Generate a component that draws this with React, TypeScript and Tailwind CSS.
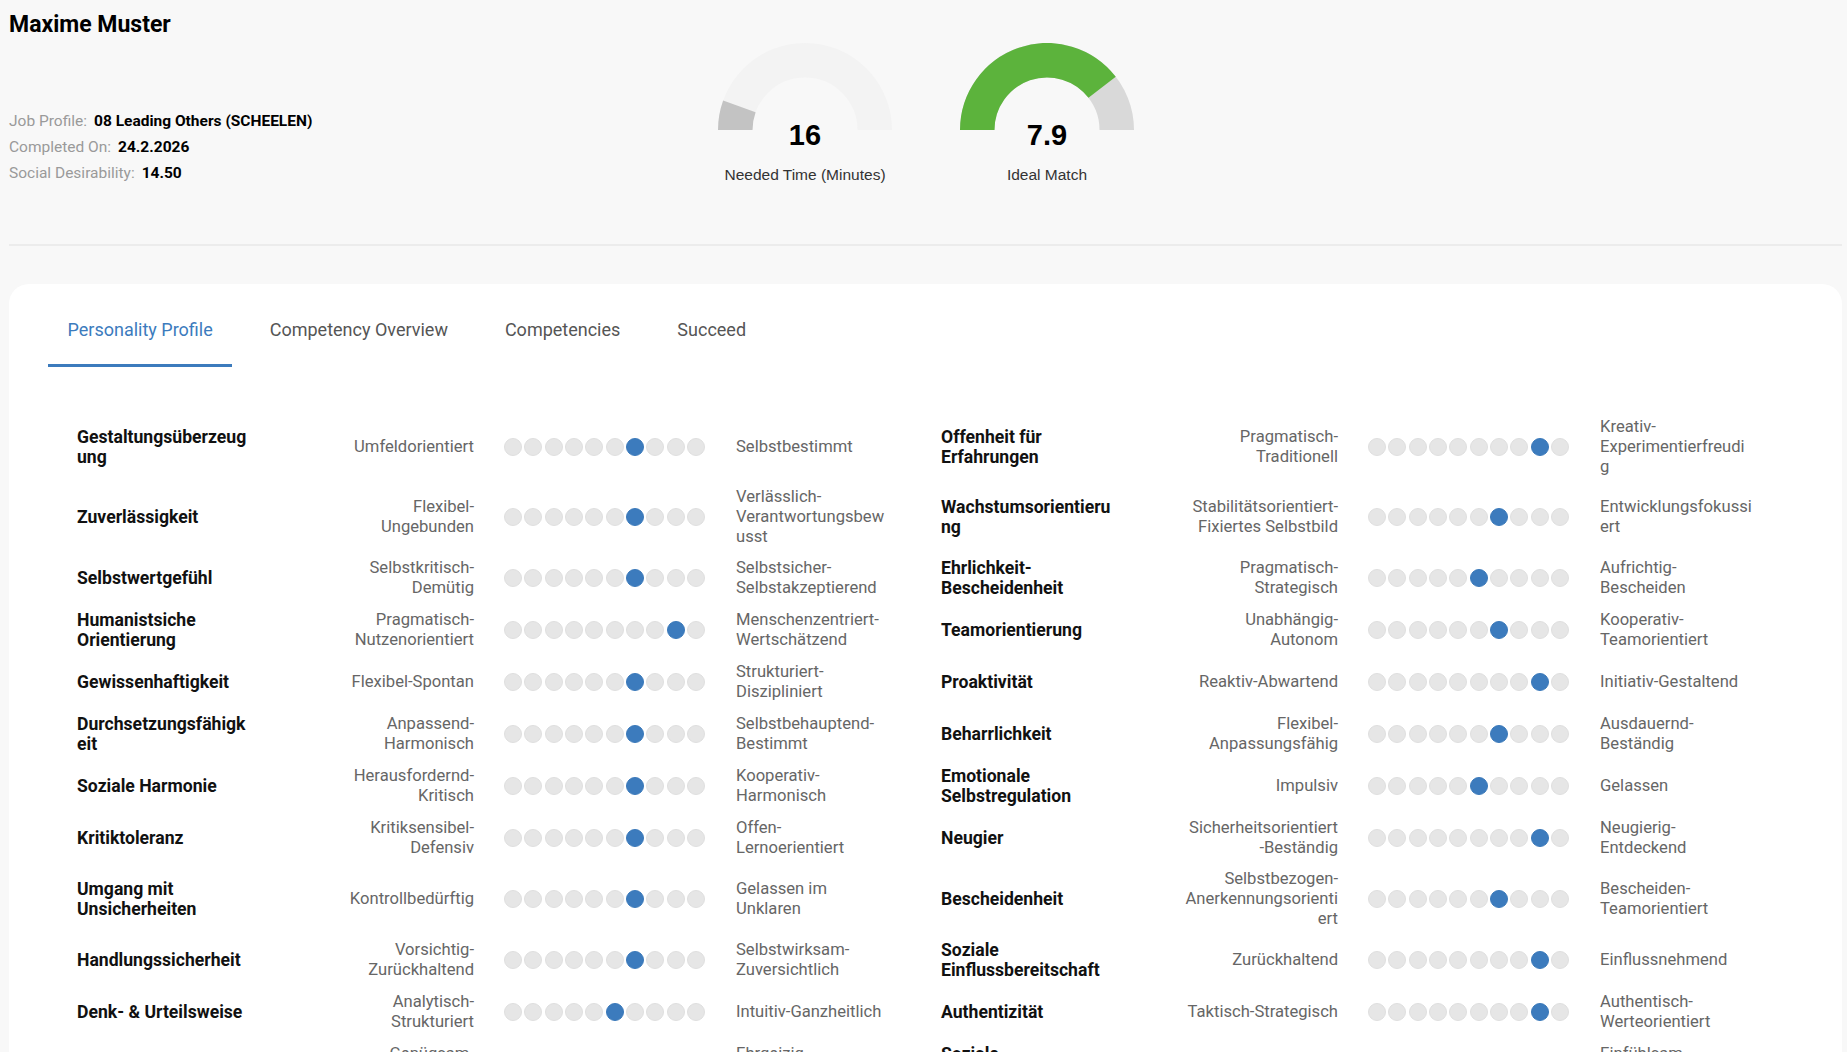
import React from 'react';

type Trait = {
  name: string;
  low: string;
  high: string;
  value: number;
};

type Row = [Trait, Trait];

const rows: Row[] = [
  [
    { name: 'Gestaltungsüberzeug\nung', low: 'Umfeldorientiert', high: 'Selbstbestimmt', value: 6 },
    { name: 'Offenheit für\nErfahrungen', low: 'Pragmatisch-\nTraditionell', high: 'Kreativ-\nExperimentierfreudi\ng', value: 8 },
  ],
  [
    { name: 'Zuverlässigkeit', low: 'Flexibel-\nUngebunden', high: 'Verlässlich-\nVerantwortungsbew\nusst', value: 6 },
    { name: 'Wachstumsorientieru\nng', low: 'Stabilitätsorientiert-\nFixiertes Selbstbild', high: 'Entwicklungsfokussi\nert', value: 6 },
  ],
  [
    { name: 'Selbstwertgefühl', low: 'Selbstkritisch-\nDemütig', high: 'Selbstsicher-\nSelbstakzeptierend', value: 6 },
    { name: 'Ehrlichkeit-\nBescheidenheit', low: 'Pragmatisch-\nStrategisch', high: 'Aufrichtig-\nBescheiden', value: 5 },
  ],
  [
    { name: 'Humanistsiche\nOrientierung', low: 'Pragmatisch-\nNutzenorientiert', high: 'Menschenzentriert-\nWertschätzend', value: 8 },
    { name: 'Teamorientierung', low: 'Unabhängig-\nAutonom', high: 'Kooperativ-\nTeamorientiert', value: 6 },
  ],
  [
    { name: 'Gewissenhaftigkeit', low: 'Flexibel-Spontan', high: 'Strukturiert-\nDiszipliniert', value: 6 },
    { name: 'Proaktivität', low: 'Reaktiv-Abwartend', high: 'Initiativ-Gestaltend', value: 8 },
  ],
  [
    { name: 'Durchsetzungsfähigk\neit', low: 'Anpassend-\nHarmonisch', high: 'Selbstbehauptend-\nBestimmt', value: 6 },
    { name: 'Beharrlichkeit', low: 'Flexibel-\nAnpassungsfähig', high: 'Ausdauernd-\nBeständig', value: 6 },
  ],
  [
    { name: 'Soziale Harmonie', low: 'Herausfordernd-\nKritisch', high: 'Kooperativ-\nHarmonisch', value: 6 },
    { name: 'Emotionale\nSelbstregulation', low: 'Impulsiv', high: 'Gelassen', value: 5 },
  ],
  [
    { name: 'Kritiktoleranz', low: 'Kritiksensibel-\nDefensiv', high: 'Offen-\nLernoerientiert', value: 6 },
    { name: 'Neugier', low: 'Sicherheitsorientiert\n-Beständig', high: 'Neugierig-\nEntdeckend', value: 8 },
  ],
  [
    { name: 'Umgang mit\nUnsicherheiten', low: 'Kontrollbedürftig', high: 'Gelassen im\nUnklaren', value: 6 },
    { name: 'Bescheidenheit', low: 'Selbstbezogen-\nAnerkennungsorienti\nert', high: 'Bescheiden-\nTeamorientiert', value: 6 },
  ],
  [
    { name: 'Handlungssicherheit', low: 'Vorsichtig-\nZurückhaltend', high: 'Selbstwirksam-\nZuversichtlich', value: 6 },
    { name: 'Soziale\nEinflussbereitschaft', low: 'Zurückhaltend', high: 'Einflussnehmend', value: 8 },
  ],
  [
    { name: 'Denk- & Urteilsweise', low: 'Analytisch-\nStrukturiert', high: 'Intuitiv-Ganzheitlich', value: 5 },
    { name: 'Authentizität', low: 'Taktisch-Strategisch', high: 'Authentisch-\nWerteorientiert', value: 8 },
  ],
  [
    { name: 'Leistungsmotivation', low: 'Genügsam-\nZufrieden', high: 'Ehrgeizig-\nLeistungsorientiert', value: 6 },
    { name: 'Soziale\nSensibilität', low: 'Sachlich', high: 'Einfühlsam-\nEmpathisch', value: 7 },
  ],
];

const tabs = ['Personality Profile', 'Competency Overview', 'Competencies', 'Succeed'];

function arcPoint(fraction: number) {
  const r = 69.75;
  const theta = Math.PI * (1 - fraction);
  return { x: 87 + r * Math.cos(theta), y: 87 - r * Math.sin(theta) };
}

function Gauge({
  value,
  fraction,
  label,
  color,
  track,
}: {
  value: string;
  fraction: number;
  label: string;
  color: string;
  track: string;
}) {
  const end = arcPoint(fraction);
  return (
    <div className="flex w-[200px] flex-col items-center">
      <svg width="174" height="87" viewBox="0 0 174 87">
        <path d="M 17.25 87 A 69.75 69.75 0 0 1 156.75 87" fill="none" stroke={track} strokeWidth="34.5" />
        <path
          d={`M 17.25 87 A 69.75 69.75 0 0 1 ${end.x} ${end.y}`}
          fill="none"
          stroke={color}
          strokeWidth="34.5"
        />
      </svg>
      <div className="-mt-[11px] font-['Liberation_Sans',Arial,sans-serif] text-[29px] font-bold leading-[32px] text-black">
        {value}
      </div>
      <div className="mt-[15px] font-['Liberation_Sans',Arial,sans-serif] text-[15.5px] leading-[18px] text-[#333]">
        {label}
      </div>
    </div>
  );
}

function Dots({ value }: { value: number }) {
  return (
    <div className="flex w-[201px] shrink-0 gap-[2.33px]">
      {Array.from({ length: 10 }).map((_, i) => (
        <span
          key={i}
          className={
            i === value
              ? 'h-[18px] w-[18px] rounded-full border border-[#3a79ba] bg-[#3c7bbd]'
              : 'h-[18px] w-[18px] rounded-full border border-[#dfdfdf] bg-[#e6e6e6]'
          }
        />
      ))}
    </div>
  );
}

function TraitCell({ trait }: { trait: Trait }) {
  return (
    <div className="flex w-[864px] shrink-0 items-center">
      <div className="w-[180px] shrink-0 whitespace-pre-line text-[17.6px] font-bold leading-[20px] text-[#111]">
        {trait.name}
      </div>
      <div className="ml-[63px] w-[154px] shrink-0 whitespace-pre-line text-right text-[#666]">{trait.low}</div>
      <div className="ml-[30px]">
        <Dots value={trait.value} />
      </div>
      <div className="ml-[31px] w-[150px] shrink-0 whitespace-pre-line text-[#666]">{trait.high}</div>
    </div>
  );
}

export default function App() {
  return (
    <div className="h-[1052px] overflow-hidden bg-[#f8f8f8] pl-[9px] pr-[5px] pt-[8px] font-['Roboto','Liberation_Sans',sans-serif]">
      {/* header */}
      <div className="flex h-[236px]">
        <div className="w-[696px] shrink-0">
          <h1 className="pt-[2px] text-[23px] font-bold leading-[30px] text-black">Maxime Muster</h1>
          <div className="mt-[68px] text-[15.5px] leading-[26px]">
            <div className="flex gap-[7px]">
              <span className="text-[#9a9a9a]">Job Profile:</span>
              <span className="font-bold text-black">08 Leading Others (SCHEELEN)</span>
            </div>
            <div className="flex gap-[7px]">
              <span className="text-[#9a9a9a]">Completed On:</span>
              <span className="font-bold text-black">24.2.2026</span>
            </div>
            <div className="flex gap-[7px]">
              <span className="text-[#9a9a9a]">Social Desirability:</span>
              <span className="font-bold text-black">14.50</span>
            </div>
          </div>
        </div>
        <div className="flex gap-[42px] pt-[35px]">
          <Gauge value="16" fraction={0.11} label="Needed Time (Minutes)" color="#c3c3c3" track="#f3f3f3" />
          <Gauge value="7.9" fraction={0.79} label="Ideal Match" color="#5cb33c" track="#d9d9d9" />
        </div>
      </div>
      <div className="h-[2px] bg-[#ececec]" />

      {/* card */}
      <div className="mt-[38px] min-h-[900px] rounded-[20px] bg-white pl-[39px] pt-[12px]">
        <div className="flex gap-[18px]">
          {tabs.map((tab, i) => (
            <div
              key={tab}
              className={
                i === 0
                  ? 'border-b-[3px] border-[#3c7bbd] px-[19.5px] py-[22px] text-[18px] leading-[24px] text-[#3c7bbd]'
                  : 'border-b-[3px] border-transparent px-[19.5px] py-[22px] text-[18px] leading-[24px] text-[#555]'
              }
            >
              {tab}
            </div>
          ))}
        </div>

        <div className="mt-[45px] pl-[29px] text-[16.6px] leading-[20px]">
          {rows.map((row, i) => (
            <div key={i} className="flex min-h-[52px] items-center py-[5px]">
              <TraitCell trait={row[0]} />
              <TraitCell trait={row[1]} />
            </div>
          ))}
        </div>
      </div>
    </div>
  );
}
